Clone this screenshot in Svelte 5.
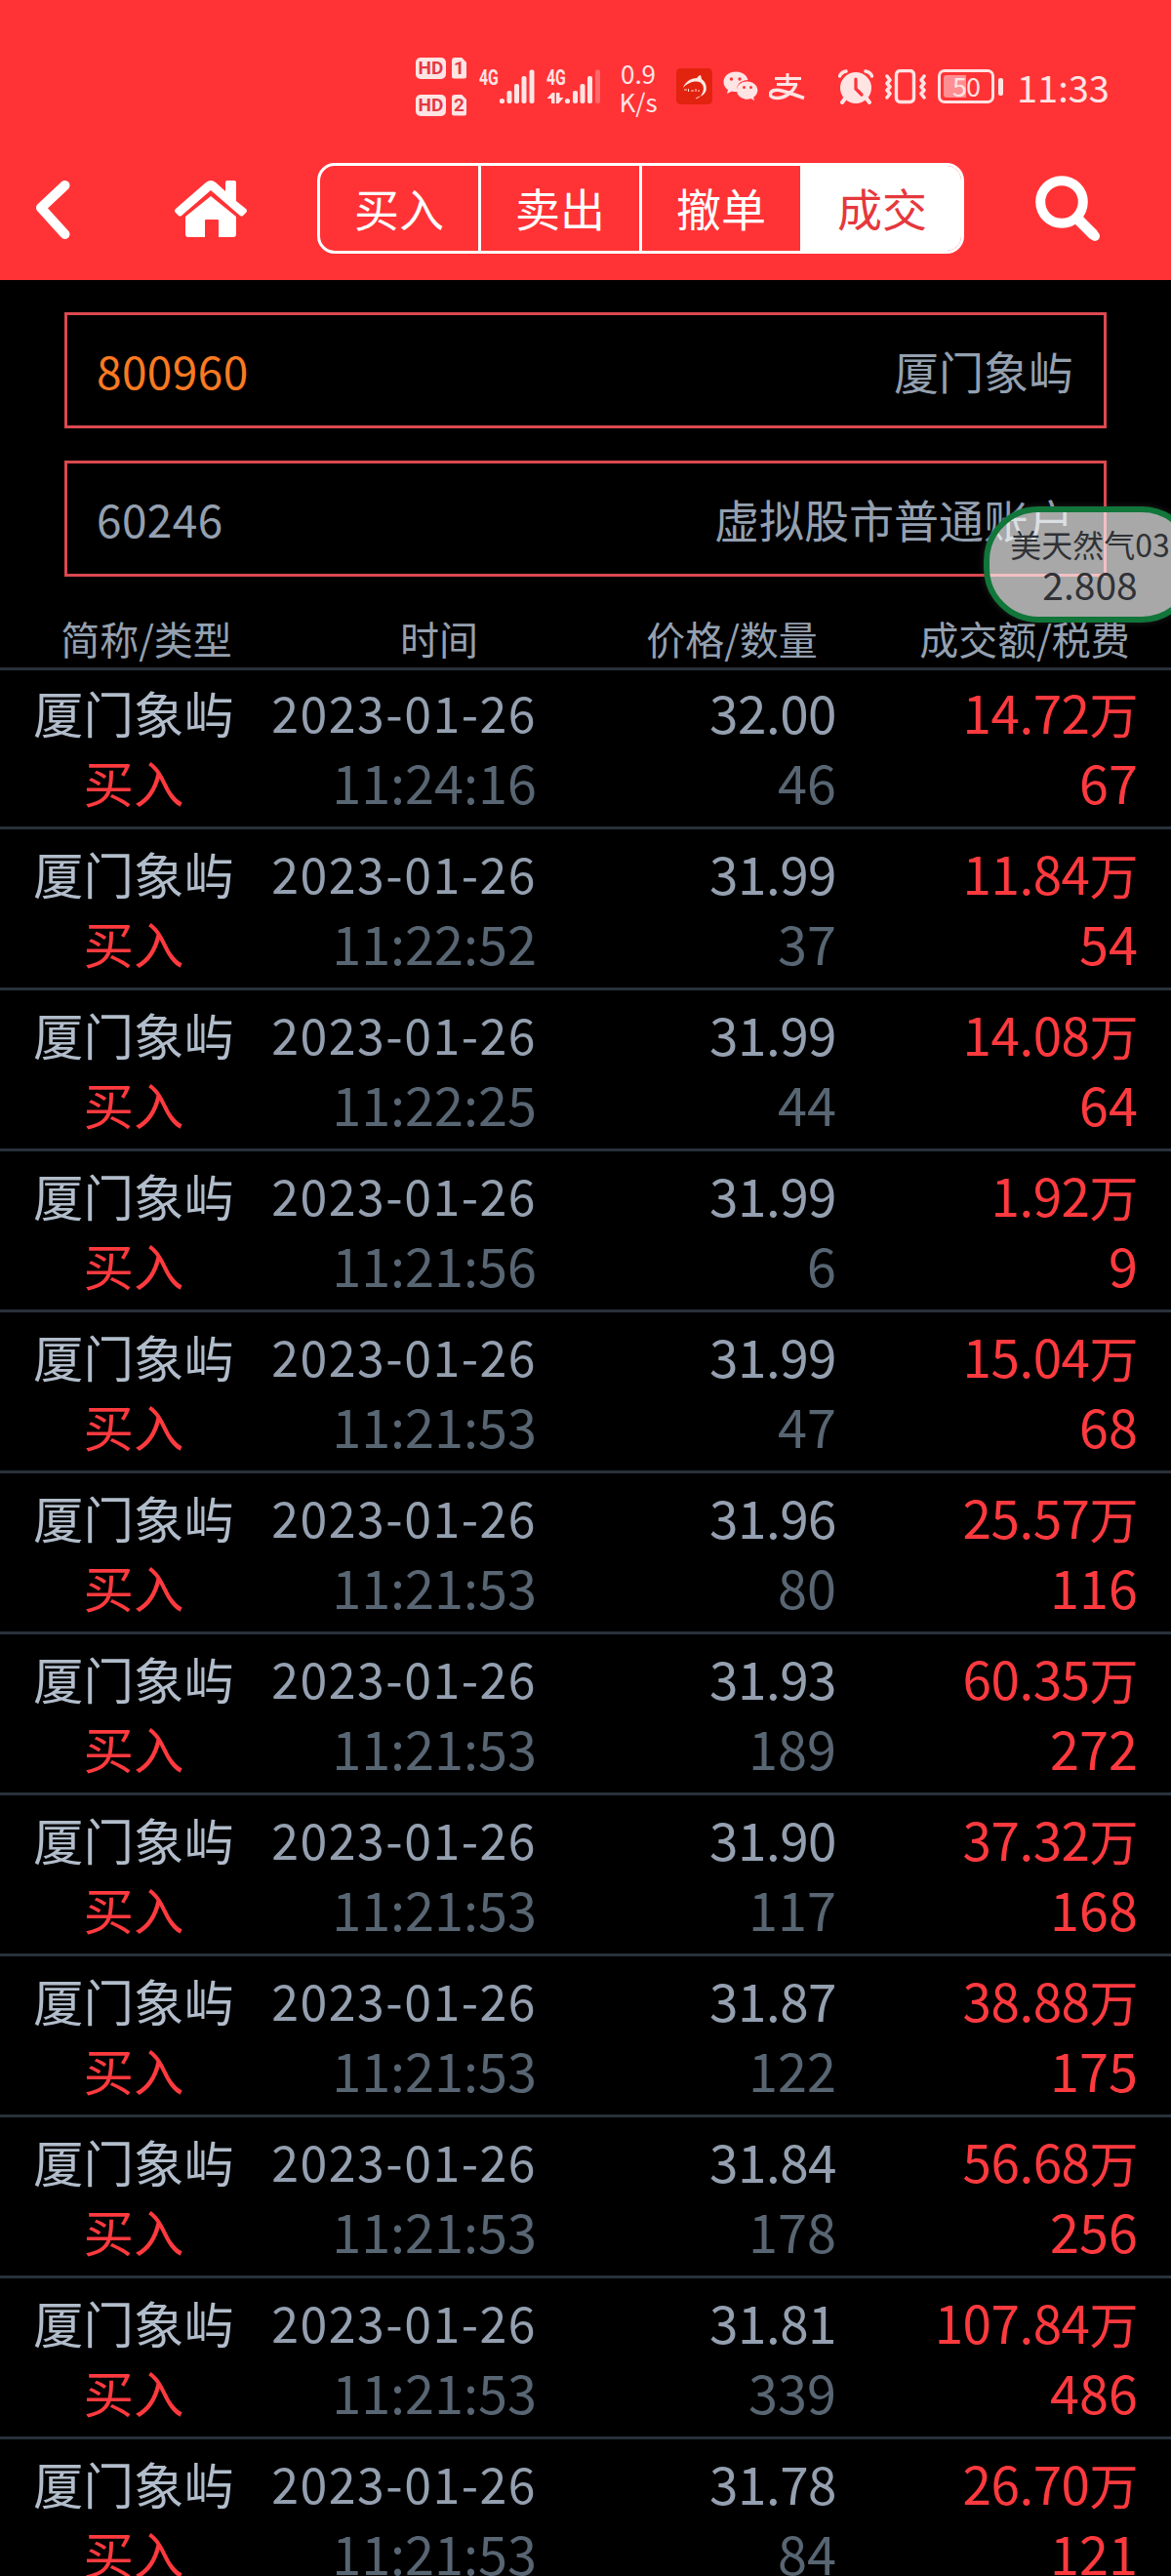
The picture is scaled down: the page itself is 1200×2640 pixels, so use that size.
<script>
  const tabs = ["买入", "卖出", "撤单", "成交"];
  let active = "成交";

  const columns = ["简称/类型", "时间", "价格/数量", "成交额/税费"];

  const trades = [
    { time: "11:24:16", price: "32.00", count: 46, total: "14.72", fee: 67 },
    { time: "11:22:52", price: "31.99", count: 37, total: "11.84", fee: 54 },
    { time: "11:22:25", price: "31.99", count: 44, total: "14.08", fee: 64 },
    { time: "11:21:56", price: "31.99", count: 6, total: "1.92", fee: 9 },
    { time: "11:21:53", price: "31.99", count: 47, total: "15.04", fee: 68 },
    { time: "11:21:53", price: "31.96", count: 80, total: "25.57", fee: 116 },
    { time: "11:21:53", price: "31.93", count: 189, total: "60.35", fee: 272 },
    { time: "11:21:53", price: "31.90", count: 117, total: "37.32", fee: 168 },
    { time: "11:21:53", price: "31.87", count: 122, total: "38.88", fee: 175 },
    { time: "11:21:53", price: "31.84", count: 178, total: "56.68", fee: 256 },
    { time: "11:21:53", price: "31.81", count: 339, total: "107.84", fee: 486 },
    { time: "11:21:53", price: "31.78", count: 84, total: "26.70", fee: 121 },
  ];
</script>

<div class="screen">
  <header>
    <div class="status">
      <div class="sims">
        {#each [1, 2] as sim}
          <div class="sim">
            <span class="hd">HD</span>
            <span class="card">{sim}</span>
          </div>
        {/each}
      </div>

      <div class="signal">
        <span class="net">4G</span>
        <svg width="38" height="36" viewBox="0 0 38 36" fill="currentColor">
          <circle cx="3.5" cy="32.5" r="2.6" />
          <rect x="8.5" y="22" width="5" height="13" rx="2" />
          <rect x="16" y="15" width="5" height="20" rx="2" />
          <rect x="23.5" y="7" width="5" height="28" rx="2" />
          <rect x="31.5" y="0.5" width="5" height="34.5" rx="2" />
        </svg>
      </div>
      <div class="signal second">
        <span class="net">4G</span>
        <svg width="57" height="36" viewBox="0 0 57 36" fill="currentColor">
          <path d="M0.5 30 6 24h2.500v11H5v-5z M10 24h3.500v5h4L12.500 35H10z" />
          <circle cx="21.5" cy="32.5" r="2.6" />
          <rect x="27" y="22" width="5" height="13" rx="2" />
          <rect x="34.5" y="15" width="5" height="20" rx="2" />
          <rect x="42" y="7" width="5" height="28" rx="2" />
          <rect x="50" y="0.5" width="5" height="34.5" rx="2" opacity="0.3" />
        </svg>
      </div>

      <div class="speed">0.9<br />K/s</div>

      <svg class="app" width="37" height="37" viewBox="0 0 37 37">
        <rect width="37" height="37" rx="4.5" fill="#e2230f" />
        <path
          d="M7 20C9 14 15 10 21 10c1-1 2-2.500 4-3l1 4c4 3 5.500 7 4.500 12-1 3-3.500 5-6 6 3-4 4.500-8 2.500-12-1.500-3-5-4-8-3.500-5 .5-9 3-12 6.500z"
          fill="#ffe9e2"
        />
        <path d="M8 22h3M12.500 21v3M15 23h3M20 21v3M22 23h2M20 31l4-2" stroke="#ffd9cc" />
      </svg>
      <svg class="wechat" width="36" height="31" viewBox="0 0 36 31">
        <path
          d="M13 .5C6 .5.500 5 .500 11c0 3.500 1.700 6 4.500 8L4 23l5-2.500q2 .500 4 .500h1.200C13 14 18 9 25.500 9 24.500 4 19.500.5 13 .5z"
          fill="#ffe4e4"
        />
        <path
          d="M24.700 10.500c-6 0-10.700 4-10.700 9.100s4.700 9.100 10.700 9.100q1.800 0 3.800-.6L32 30l-.8-3.300c2.500-1.800 4.200-4.200 4.200-7.100 0-5.100-4.700-9.100-10.700-9.100z"
          fill="#ffe4e4"
        />
        <circle cx="8.5" cy="8" r="1.7" fill="#ff3336" />
        <circle cx="17" cy="8" r="1.7" fill="#ff3336" />
        <circle cx="21.5" cy="16.5" r="1.5" fill="#ff3336" />
        <circle cx="28.5" cy="16.5" r="1.5" fill="#ff3336" />
      </svg>
      <svg class="alipay" width="38" height="28" viewBox="0 0 38 28" fill="none" stroke="#ffe4e4">
        <path d="M6 5.500H33M19 0V11M8 11.500H29" stroke-width="3" />
        <path d="M28 11C25 19 17 25.500 8 25.500c-5 0-7-2-6.500-4.500C2 18 6 16.500 11 17.500c8 1.500 17 5.500 25 8" stroke-width="3.5" />
      </svg>

      <svg class="alarm" width="36" height="36" viewBox="0 0 36 36" fill="none" stroke="#ffe4e4">
        <circle cx="18" cy="19" r="16" fill="#ffe4e4" stroke="none" />
        <path d="M1.500 7Q3 3 8 2M34.500 7Q33 3 28 2" stroke-width="3.5" stroke-linecap="round" />
        <path d="M7 30l-3 4M29 30l3 4" stroke-width="4" stroke-linecap="round" />
        <path d="M18 10v10l6 6" stroke="#ff3336" stroke-width="3.2" stroke-linecap="round" />
      </svg>
      <svg class="vibrate" width="42" height="36" viewBox="0 0 42 36" fill="none" stroke="#ffe4e4">
        <rect x="11.5" y="1.5" width="18" height="32" rx="4" stroke-width="3.4" />
        <path
          d="M2 7l3 4-3 3.500 3 3.500-3 3.500 3 3.500-3 4M40 7l-3 4 3 3.500-3 3.500 3 3.500-3 3.500 3 4"
          stroke-width="3.5"
          stroke-linejoin="round"
          stroke-linecap="round"
        />
      </svg>

      <div class="battery"><span>50</span></div>
      <div class="tip"></div>
      <div class="clock">11:33</div>
    </div>

    <nav>
      <svg class="back" width="36" height="66" viewBox="0 0 36 66">
        <path d="M30.500 9 6 32l24.500 27" fill="none" stroke="#fff" stroke-width="10" stroke-linecap="round" stroke-linejoin="round" />
      </svg>
      <svg class="home" width="76" height="60" viewBox="0 0 76 60" fill="#fff">
        <path
          d="M33 3Q38-1 43 3l10 9V3q0-2 2-2h7q2 0 2 2v19l10 8q2 2 0 4l-3 3q-1 1-3 0L38 11 8 37q-2 1-3 0l-3-3q-2-2 0-4z"
        />
        <path d="M38 17 64 38v18q0 3-3 3H46V42q0-1-1-1H33q-1 0-1 1v17H15q-3 0-3-3V38z" />
      </svg>
      <div class="tabs">
        {#each tabs as tab}
          <button class:active={tab === active} on:click={() => (active = tab)}>{tab}</button>
        {/each}
      </div>
      <svg class="search" width="68" height="68" viewBox="0 0 68 68" fill="none" stroke="#fff">
        <circle cx="27" cy="27" r="21.800" stroke-width="10" />
        <path d="M43 44 60 61" stroke-width="11" />
        <path d="M57 58l4 4" stroke-width="10" stroke-linecap="round" />
      </svg>
    </nav>
  </header>

  <div class="fields">
    <div class="field">
      <span class="code">800960</span>
      <span>厦门象屿</span>
    </div>
    <div class="field">
      <span class="account">60246</span>
      <span>虚拟股市普通账户</span>
    </div>
  </div>

  <div class="columns">
    {#each columns as column}
      <span>{column}</span>
    {/each}
  </div>

  <ul>
    {#each trades as trade}
      <li>
        <div class="stock">
          <span class="name">厦门象屿</span>
          <span class="side">买入</span>
        </div>
        <div>
          <span class="date">2023-01-26</span>
          <span class="dim">{trade.time}</span>
        </div>
        <div>
          <span class="price">{trade.price}</span>
          <span class="dim">{trade.count}</span>
        </div>
        <div class="amount">
          <span class="price">{trade.total}<small>万</small></span>
          <span>{trade.fee}</span>
        </div>
      </li>
    {/each}
  </ul>

  <div class="ticker">
    <span>美天然气03</span>
    <strong>2.808</strong>
  </div>
</div>

<style>
  :global(body) {
    background: #000;
  }

  .screen {
    position: relative;
    width: 1200px;
    height: 2640px;
    overflow: hidden;
    background: #000;
    color: #94a0b0;
    font-family: "Noto Sans CJK SC", sans-serif;
  }

  svg {
    display: block;
    flex: none;
  }

  header {
    height: 287px;
    background: #ff3336;
  }

  .status {
    display: flex;
    align-items: center;
    height: 167px;
    padding: 10px 0 0 426px;
    box-sizing: border-box;
    color: #ffe4e4;
  }

  .sims {
    display: flex;
    flex-direction: column;
    gap: 16px;
  }

  .sim {
    display: flex;
    gap: 6px;
  }

  .hd,
  .card {
    height: 22px;
    border-radius: 5px;
    background: #ffe4e4;
    color: #e03a45;
    font: bold 19px/22px Roboto, sans-serif;
    text-align: center;
  }

  .hd {
    width: 31px;
  }

  .card {
    width: 15px;
    border-radius: 3px;
    clip-path: polygon(0 0, 65% 0, 100% 25%, 100% 100%, 0 100%);
  }

  .signal {
    position: relative;
    margin-left: 33px;
  }

  .second {
    margin-left: 11px;
  }

  .net {
    position: absolute;
    left: -20px;
    top: 0;
    font: bold 22px/17px Roboto, sans-serif;
    transform: scaleX(0.72);
    transform-origin: left;
  }

  .second .net {
    left: 0;
  }

  .speed {
    width: 50px;
    margin-left: 12px;
    font-size: 26px;
    line-height: 29px;
    text-align: center;
  }

  .app {
    margin-left: 14px;
  }

  .wechat,
  .alipay {
    margin-left: 11px;
  }

  .alarm {
    margin-left: 33px;
  }

  .vibrate {
    margin-left: 12px;
  }

  .battery {
    width: 58px;
    height: 35px;
    margin-left: 12px;
    box-sizing: border-box;
    border: 3px solid #ffe4e4;
    border-radius: 7px;
    padding: 3px;
  }

  .battery span {
    display: block;
    height: 23px;
    border-radius: 3px;
    background: linear-gradient(90deg, #ff8f92 50%, transparent 50%);
    font-size: 27px;
    line-height: 22px;
    letter-spacing: -1px;
    text-align: center;
  }

  .tip {
    width: 5px;
    height: 18px;
    margin-left: 4px;
    border-radius: 2px;
    background: #ffe4e4;
  }

  .clock {
    margin-left: 14px;
    font-size: 38px;
    line-height: 38px;
  }

  nav {
    display: flex;
    align-items: center;
    height: 93px;
    padding-left: 36px;
  }

  .home {
    margin-left: 106px;
  }

  .tabs {
    display: flex;
    width: 663px;
    height: 93px;
    margin-left: 71px;
    box-sizing: border-box;
    border: 3px solid #fff;
    border-radius: 18px;
    overflow: hidden;
  }

  .search {
    margin-left: 73px;
  }

  button {
    flex: 1;
    padding: 0 0 2px;
    border: 0;
    border-right: 3px solid #fff;
    background: none;
    color: #fff;
    font-family: inherit;
    font-size: 46px;
    line-height: 85px;
  }

  button.active {
    border: 0;
    background: #fff;
    color: #e5383d;
  }

  .fields {
    display: flex;
    flex-direction: column;
    gap: 33px;
    padding: 33px 66px 0;
  }

  .field {
    display: flex;
    justify-content: space-between;
    height: 119px;
    box-sizing: border-box;
    border: 3px solid #dc4850;
    padding: 0 31px 0 30px;
    font-size: 46px;
    line-height: 113px;
  }

  .code {
    color: #f97a22;
  }

  .code,
  .account {
    letter-spacing: 0.4px;
  }

  .columns {
    display: grid;
    grid-template-columns: repeat(4, 1fr);
    height: 93px;
    margin-top: 3px;
    padding-top: 30px;
    box-sizing: border-box;
    border-bottom: 3px solid #29313b;
    font-size: 40px;
    line-height: 60px;
    text-align: center;
  }

  ul {
    margin: 0;
    padding: 0;
    list-style: none;
  }

  li {
    display: grid;
    grid-template-columns: 274px 276px 307px 309px;
    height: 165px;
    padding-top: 9px;
    box-sizing: border-box;
    border-bottom: 3px solid #29313b;
    font-size: 54px;
    line-height: 71px;
    text-align: right;
  }

  li:first-child {
    height: 163px;
    padding-top: 7px;
  }

  li span {
    display: block;
    height: 71px;
    white-space: nowrap;
  }

  li small {
    font-size: 50px;
  }

  .stock {
    font-size: 51.5px;
    text-align: center;
  }

  .name {
    color: #b2bdcb;
  }

  .date {
    font-size: 50px;
    letter-spacing: 1.5px;
  }

  .price {
    font-size: 53px;
    letter-spacing: -0.5px;
  }

  .dim {
    color: #586572;
  }

  .side,
  .amount {
    color: #ff3a3f;
  }

  /* floats over the page and runs off its right edge */
  .ticker {
    position: absolute;
    left: 1008px;
    top: 519px;
    display: flex;
    flex-direction: column;
    align-items: center;
    width: 218px;
    height: 119px;
    box-sizing: border-box;
    border: 6px solid #11763a;
    border-radius: 56px;
    padding-top: 12px;
    background: rgba(255, 255, 255, 0.66);
    box-shadow: 0 0 7px rgba(120, 120, 120, 0.3);
    color: #303236;
    font-size: 32px;
    line-height: 41px;
    white-space: nowrap;
  }

  .ticker strong {
    font-size: 39px;
    font-weight: 400;
  }
</style>
